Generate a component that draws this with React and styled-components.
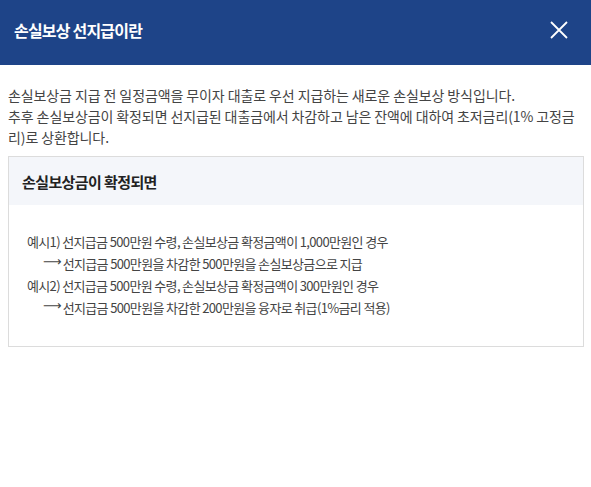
import React from "react";
import styled, { createGlobalStyle } from "styled-components";

const GlobalStyle = createGlobalStyle`
  html, body {
    margin: 0;
    padding: 0;
    background: #fff;
  }
  body {
    font-family: "Noto Sans CJK KR", "Noto Sans", sans-serif;
    color: #333;
  }
`;

const Header = styled.header`
  display: flex;
  align-items: center;
  justify-content: space-between;
  height: 65px;
  padding: 0 22px 6px 14px;
  box-sizing: border-box;
  background: #1e4488;
  color: #fff;
  h1 {
    margin: 0;
    font-size: 16px;
    font-weight: 700;
    letter-spacing: -0.8px;
  }
`;

const CloseButton = styled.button`
  display: flex;
  align-items: center;
  justify-content: center;
  padding: 0;
  background: transparent;
  border: none;
  cursor: pointer;
  width: 20px;
  height: 20px;
`;

const Body = styled.div`
  padding: 20px 7px 0 8px;
`;

const Intro = styled.p`
  margin: 0 0 8px;
  font-size: 14px;
  line-height: 21px;
  letter-spacing: -0.1px;
  color: #444;
`;

const Box = styled.section`
  border: 1px solid #dcdcdc;
  h2 {
    margin: 0;
    padding: 0 13px;
    height: 48px;
    display: flex;
    align-items: center;
    background: #f4f6fa;
    font-size: 15px;
    font-weight: 700;
    letter-spacing: -0.6px;
    color: #222;
  }
`;

const Examples = styled.ul`
  list-style: none;
  margin: 0;
  padding: 26px 18px 27px;
  li {
    font-size: 13px;
    line-height: 22px;
    letter-spacing: -0.65px;
    color: #444;
  }
`;

const Result = styled.div`
  display: flex;
  align-items: center;
  padding-left: 16px;
  &::before {
    content: "⟶";
    font-family: "DejaVu Sans", sans-serif;
    font-size: 13px;
    letter-spacing: 0;
    margin-right: 1px;
    position: relative;
    top: -2px;
  }
`;

const examples = [
  {
    label: "예시1) 선지급금 500만원 수령, 손실보상금 확정금액이 1,000만원인 경우",
    result: "선지급금 500만원을 차감한 500만원을 손실보상금으로 지급",
  },
  {
    label: "예시2) 선지급금 500만원 수령, 손실보상금 확정금액이 300만원인 경우",
    result: "선지급금 500만원을 차감한 200만원을 융자로 취급(1%금리 적용)",
  },
];

export default function App() {
  return (
    <>
      <GlobalStyle />
      <Header>
        <h1>손실보상 선지급이란</h1>
        <CloseButton aria-label="닫기">
          <svg width="20" height="20" viewBox="0 0 20 20">
            <path d="M2 2 L18 18 M18 2 L2 18" stroke="#fff" strokeWidth="1.8" fill="none" />
          </svg>
        </CloseButton>
      </Header>
      <Body>
        <Intro>
          손실보상금 지급 전 일정금액을 무이자 대출로 우선 지급하는 새로운 손실보상 방식입니다.
          <br />
          추후 손실보상금이 확정되면 선지급된 대출금에서 차감하고 남은 잔액에 대하여 초저금리(1% 고정금리)로 상환합니다.
        </Intro>
        <Box>
          <h2>손실보상금이 확정되면</h2>
          <Examples>
            {examples.map((ex) => (
              <React.Fragment key={ex.label}>
                <li>{ex.label}</li>
                <li>
                  <Result>{ex.result}</Result>
                </li>
              </React.Fragment>
            ))}
          </Examples>
        </Box>
      </Body>
    </>
  );
}
